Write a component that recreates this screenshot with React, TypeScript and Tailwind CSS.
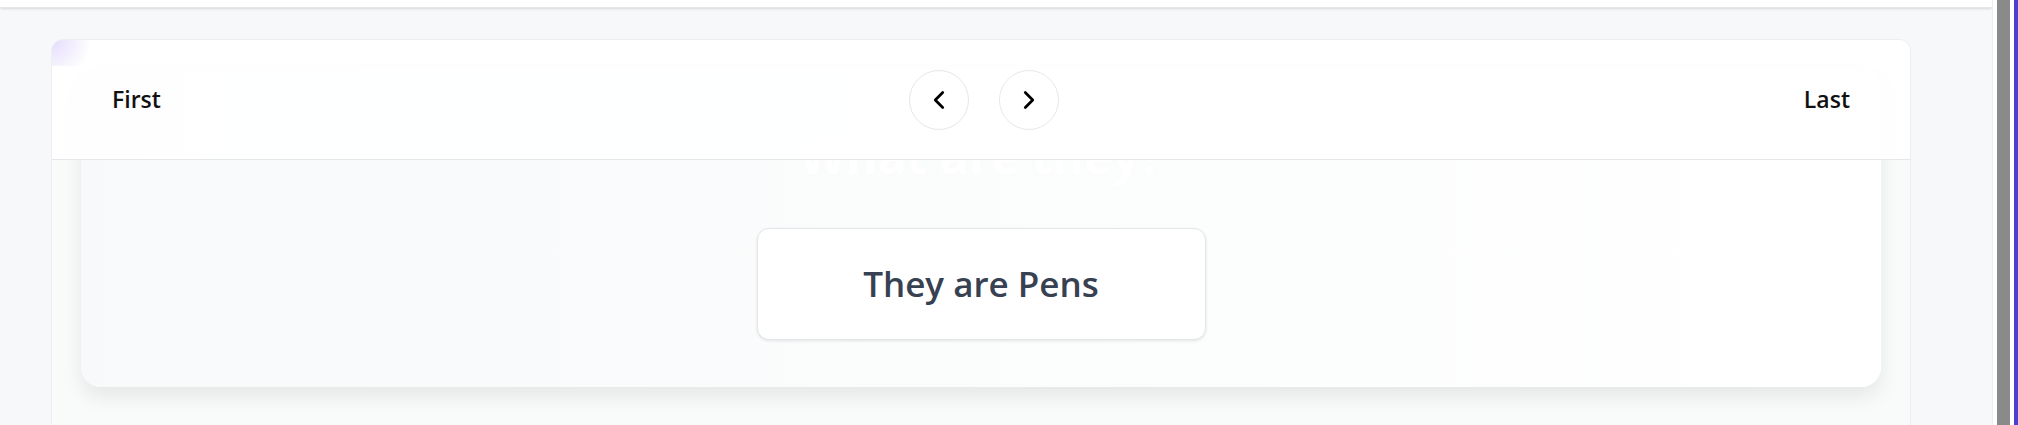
import { ChevronLeft, ChevronRight } from "lucide-react";

const NavButton = ({ dir }: { dir: "prev" | "next" }) => (
  <button className="flex h-[60px] w-[60px] items-center justify-center rounded-full border border-[#e5e7eb] bg-white text-black">
    {dir === "prev" ? (
      <ChevronLeft size={30} strokeWidth={2.2} />
    ) : (
      <ChevronRight size={30} strokeWidth={2.2} />
    )}
  </button>
);

export default function App() {
  return (
    <div
      className="flex h-[425px] w-[2018px] overflow-hidden bg-[#f7f8fa]"
      style={{ fontFamily: '"Open Sans", "Noto Sans", sans-serif' }}
    >
      {/* page */}
      <div className="flex min-w-0 flex-1 flex-col">
        <div className="h-[8px] shrink-0 border-b border-[#e5e7eb] bg-white shadow-sm" />
        <div className="flex-1 pl-[51px] pr-[81px] pt-[31px]">
          <div className="relative h-[500px] overflow-hidden rounded-[12px] border border-[#eceef1] bg-[#f9fafa]">
            <div className="pointer-events-none absolute left-0 top-0 z-20 h-[26px] w-[50px] bg-[radial-gradient(circle_at_top_left,rgba(139,92,246,0.22),transparent_70%)]" />

            {/* header */}
            <div className="relative z-10 grid h-[120px] grid-cols-[1fr_auto_1fr] items-center border-b border-[#e6e7ea] bg-white/90 px-[60px]">
              <span className="text-[23px] font-semibold text-[#111]">First</span>
              <div className="ml-[5px] flex gap-[30px]">
                <NavButton dir="prev" />
                <NavButton dir="next" />
              </div>
              <span className="justify-self-end text-[23px] font-semibold text-[#111]">
                Last
              </span>
            </div>

            {/* flashcard */}
            <div className="-mt-[90px] px-[29px]">
              <div className="flex flex-col items-center rounded-[20px] bg-gradient-to-r from-[#f8f9fb] via-[#fbfcfc] to-white pb-[47px] pt-[62px] shadow-[0_10px_20px_rgba(0,0,0,0.08)]">
                <div className="h-[50px] text-[48px] font-bold leading-none text-white">
                  What are they?
                </div>
                <div className="mt-[46px] flex h-[112px] w-[449px] items-center justify-center rounded-[12px] border border-[#e3e5e8] bg-white shadow-[0_1px_3px_rgba(0,0,0,0.1)]">
                  <span className="text-[35px] font-semibold text-[#374151]">
                    They are Pens
                  </span>
                </div>
              </div>
            </div>
          </div>
        </div>
      </div>

      {/* right edge */}
      <div className="flex w-[26px] shrink-0 border-l border-[#eceef1]">
        <div className="w-[4px] bg-white" />
        <div className="w-[13px] bg-[#8a8a8a]" />
        <div className="w-[4px] bg-white" />
        <div className="w-[4px] bg-[#4f3fd0]" />
      </div>
    </div>
  );
}
